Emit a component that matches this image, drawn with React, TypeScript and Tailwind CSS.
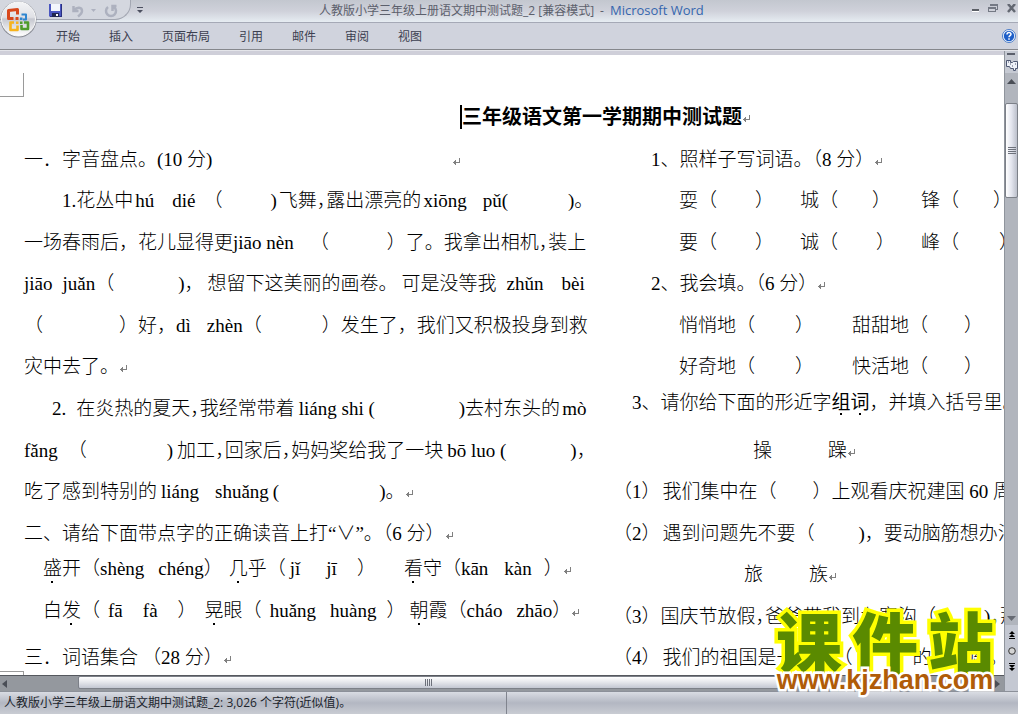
import type { ReactNode } from "react";

const CJK = "font-['Liberation_Serif','Noto_Sans_CJK_SC',serif]";

function Gap({ w }: { w: string }) {
  return <span aria-hidden="true" className={`shrink-0 ${w}`} />;
}

function Ret() {
  return (
    <svg width="8" height="8" viewBox="0 0 8 8" className="mt-1 shrink-0" fill="none" stroke="#808080" shapeRendering="crispEdges">
      <path d="M7.500 0V4.500H1M3.500 2V7M2.500 3V6" />
    </svg>
  );
}

/* Full-width punctuation set at half width */
function Half({ children }: { children: ReactNode }) {
  return <span className="[font-feature-settings:'halt']">{children}</span>;
}

function Dot({ children }: { children: ReactNode }) {
  return (
    <span className="relative">
      {children}
      <span className="absolute -bottom-0.5 left-2 h-0.5 w-0.5 bg-black" />
    </span>
  );
}

function Line({ children, pad = "", raised = false }: { children: ReactNode; pad?: string; raised?: boolean }) {
  return (
    <p className={`flex min-h-0 items-center whitespace-pre leading-6 ${raised ? "pb-3" : ""} ${pad}`}>{children}</p>
  );
}

function LeftColumn() {
  return (
    <div className="grid auto-rows-fr pl-6">
      <Line>一．字音盘点。(10 分)<Gap w="w-60" /><Ret /></Line>
      <Line pad="pl-[38px]">
        1.花丛中<Gap w="w-0.5" />hú<Gap w="w-4.5" />dié<Gap w="w-2" />（<Gap w="w-12" />)<Gap w="w-0.5" />飞舞<Half>，</Half>露出漂亮的
        <Gap w="w-0.5" />xiōng<Gap w="w-4" />pǔ(<Gap w="w-15" />)。
      </Line>
      <Line>
        一场春雨后，花儿显得更jiāo nèn<Gap w="w-4" />（<Gap w="w-14.5" />）了。我拿出相机<Half>，</Half>装上
      </Line>
      <Line>
        jiāo<Gap w="w-2.5" />juǎn（<Gap w="w-16" />)，<Gap w="w-1" />想留下这美丽的画卷。<Gap w="w-1" />可是没等我
        <Gap w="w-2.5" />zhǔn<Gap w="w-4.5" />bèi
      </Line>
      <Line>
        （<Gap w="w-19" />）好，dì<Gap w="w-4" />zhèn（<Gap w="w-15" />）发生了，我们又积极投身到救
      </Line>
      <Line>灾中去了。<Ret /></Line>
      <Line pad="pl-7">
        2.<Gap w="w-2.5" />在炎热的夏天<Half>，</Half>我经常带着<Gap w="w-1" />liáng shi (<Gap w="w-21" />)去村东头的
        <Gap w="w-0.5" />mò
      </Line>
      <Line>
        fǎng<Gap w="w-2.5" />（<Gap w="w-20" />)<Gap w="w-1" />加工<Half>，</Half>回家后<Half>，</Half>妈妈奖给我了一块
        <Gap w="w-1" />bō luo (<Gap w="w-16" />)<Half>，</Half>
      </Line>
      <Line>
        吃了感到特别的<Gap w="w-1" />liáng<Gap w="w-4" />shuǎng<Gap w="w-1" />(<Gap w="w-25" />)。<Ret />
      </Line>
      <Line>二、请给下面带点字的正确读音上打“∨”。（6 分）<Ret /></Line>
      <Line raised pad="pl-[19px]">
        <Dot>盛</Dot>开（shèng<Gap w="w-3.5" />chéng）<Gap w="w-1.5" /><Dot>几</Dot>乎（<Gap w="w-1" />jǐ
        <Gap w="w-6.5" />jī<Gap w="w-5" />）<Gap w="w-7" /><Dot>看</Dot>守（kān<Gap w="w-4" />kàn<Gap w="w-3" />）<Ret />
      </Line>
      <Line raised pad="pl-[19px]">
        白<Dot>发</Dot>（<Gap w="w-2" />fā<Gap w="w-5" />fà<Gap w="w-5" />）<Gap w="w-2" /><Dot>晃</Dot>眼（
        <Gap w="w-2" />huǎng<Gap w="w-3.5" />huàng<Gap w="w-2.5" />）<Gap w="w-1" /><Dot>朝</Dot>霞（cháo
        <Gap w="w-3.5" />zhāo）<Ret />
      </Line>
      <Line>三．词语集合<Gap w="w-1" />（28 分）<Ret /></Line>
    </div>
  );
}

function RightColumn() {
  return (
    <div className="grid min-w-0 auto-rows-fr overflow-hidden">
      <Line pad="pl-[38px]">1、照样子写词语。（8 分）<Ret /></Line>
      <Line pad="pl-[66px]">
        耍（<Gap w="w-9.5" />）<Gap w="w-6.5" />城（<Gap w="w-8.5" />）<Gap w="w-7.5" />锋（<Gap w="w-8.5" />）
      </Line>
      <Line pad="pl-[66px]">
        要（<Gap w="w-9.5" />）<Gap w="w-6.5" />诚（<Gap w="w-9.5" />）<Gap w="w-6.5" />峰（<Gap w="w-10" />）
      </Line>
      <Line pad="pl-[38px]">2、我会填。（6 分）<Ret /></Line>
      <Line pad="pl-[66px]">悄悄地（<Gap w="w-10" />）<Gap w="w-9.5" />甜甜地（<Gap w="w-9" />）</Line>
      <Line pad="pl-[66px]">好奇地（<Gap w="w-10" />）<Gap w="w-9.5" />快活地（<Gap w="w-9" />）</Line>
      <Line raised pad="pl-[19px]">
        3、请你给下面的形近字<b><Dot>组</Dot><Dot>词</Dot></b>，并填入括号里。
      </Line>
      <Line pad="pl-35">操<Gap w="w-14" />躁<Ret /></Line>
      <Line>（1）<Gap w="w-0.5" />我们集中在（<Gap w="w-9" />）上观看庆祝建国 60 周年</Line>
      <Line>（2）<Gap w="w-0.5" />遇到问题先不要（<Gap w="w-11" />)，要动脑筋想办法</Line>
      <Line pad="pl-[131px]">旅<Gap w="w-11.5" />族<Ret /></Line>
      <Line>（3）国庆节放假<Half>，</Half>爸爸带我到九寨沟（<Gap w="w-12" />)<Half>，</Half>那</Line>
      <Line>（4）<Gap w="w-0.5" />我们的祖国是一个多（<Gap w="w-15" />的大家庭。</Line>
    </div>
  );
}

function OfficeButton() {
  return (
    <button aria-label="Office" className="absolute left-0 top-0 z-10">
      <svg width="38" height="39" viewBox="0 0 38 39">
        <defs>
          <linearGradient id="orb" x1="0" y1="0" x2="0" y2="1">
            <stop offset="0" stopColor="#f4f5f7" />
            <stop offset=".45" stopColor="#dfe0e5" />
            <stop offset=".5" stopColor="#c6c8d0" />
            <stop offset="1" stopColor="#ffffff" />
          </linearGradient>
        </defs>
        <circle cx="18.500" cy="19.500" r="18" fill="#8b8e97" />
        <circle cx="18.500" cy="19" r="17" fill="url(#orb)" stroke="#fafafa" />
        <g fill="none" strokeLinejoin="round">
          <path d="M17.500 14.500V9.500L8.500 10.500V18.500H13.500" stroke="#d8481c" strokeWidth="3" />
          <path d="M21.500 14.500H26V19.500H23" stroke="#2f86d0" strokeWidth="2" />
          <path d="M14 22.500H10.500V30H17.500V25.500" stroke="#f7b31c" strokeWidth="2.600" />
          <path d="M21.500 25V29H28V22.500H24" stroke="#4f9c2c" strokeWidth="2.600" />
        </g>
        <path d="M15.500 17h3v3h-3z" fill="#d8481c" />
        <path d="M20 17.500h2.500v2.500H20z" fill="#2f86d0" />
        <path d="M16 21.500h2.500V24H16z" fill="#f7b31c" />
        <path d="M20 21.500h2.500V24H20z" fill="#4f9c2c" />
      </svg>
    </button>
  );
}

function TitleBar() {
  return (
    <header className="relative flex h-[22px] shrink-0 items-start bg-linear-to-b from-[#c3c7cf] via-[#cfd1da] to-[#e6ecf2]">
      <div className="flex h-5 w-[131px] shrink-0 items-center rounded-br-2xl border-b border-r border-[#a3a7b2] bg-[#d4d7df] pt-0.5 pl-12">
        <button aria-label="保存">
          <svg width="15" height="15" viewBox="0 0 15 15">
            <path d="M1 1h13v13H2l-1-1z" fill="#4a56c0" />
            <path d="M13 1h1v13H2v-1h11z" fill="#2a3080" />
            <path d="M3 1h9v7H3z" fill="#f3f6fc" />
            <path d="M4 10h7v4H4z" fill="#20264f" />
            <path d="M8 11h2v2H8z" fill="#fff" />
          </svg>
        </button>
        <button aria-label="撤消" className="ml-2">
          <svg width="14" height="14" viewBox="0 0 14 14" fill="none" stroke="#adb1bf" strokeWidth="2.500">
            <path d="M2.500 2v5h5M3 6.500c3-4 8-3.500 8 .5 0 2-2 4-4 5.500" />
          </svg>
        </button>
        <svg width="5" height="3" viewBox="0 0 5 3" className="ml-1.5"><path d="M0 0h5L2.500 3z" fill="#adb1bf" /></svg>
        <button aria-label="恢复" className="ml-2">
          <svg width="14" height="14" viewBox="0 0 14 14" fill="none" stroke="#adb1bf" strokeWidth="2.500">
            <path d="M4 3a5 5 0 1 0 6 0M12.500 2H8.500v5" />
          </svg>
        </button>
      </div>
      <button aria-label="自定义快速访问工具栏" className="mt-[7px] ml-1.5">
        <svg width="6" height="6" viewBox="0 0 6 6" fill="#4c5060"><path d="M0 0h6v1H0zM0 3h6L3 6z" /></svg>
      </button>
      <h1 className="flex-1 whitespace-pre pl-44 text-xs leading-[21px] text-[#5c606c]">
        人教版小学三年级上册语文期中测试题_2 [兼容模式]<span className="mx-1.5">-</span><span className="text-[13px] text-[#3566ae]">Microsoft Word</span>
      </h1>
      <div className="flex items-center gap-2 pt-1">
        <button aria-label="最小化">
          <svg width="8" height="10" viewBox="0 0 8 10"><path d="M0 5h7v2H0z" fill="#5b5f66" /><path d="M0 7h7v1H0z" fill="#fff" /></svg>
        </button>
        <button aria-label="还原">
          <svg width="10" height="10" viewBox="0 0 10 10" fill="none" stroke="#747984" shapeRendering="crispEdges">
            <path d="M2 .5h7.500v5H8M2 1.500h7M.5 3.500h7v4h-7zM0 4.500h8" />
          </svg>
        </button>
        <button aria-label="关闭">
          <svg width="12" height="10" viewBox="0 0 12 10" stroke="#636872" strokeWidth="2.500"><path d="M2 0l7 8M9 0L2 8" /></svg>
        </button>
      </div>
    </header>
  );
}

const tabs = ["开始", "插入", "页面布局", "引用", "邮件", "审阅", "视图"];

function Ribbon() {
  return (
    <nav className="flex h-[27px] shrink-0 items-center border-t border-[#a5a9b6] bg-[#d0d3dd] pl-14 text-xs text-[#3c4050]">
      <div className="flex flex-1 gap-[29px] pt-0.5">
        {tabs.map((t) => (
          <button key={t}>{t}</button>
        ))}
      </div>
      <button aria-label="帮助" className="mr-0.5">
        <svg width="14" height="14" viewBox="0 0 14 14">
          <circle cx="7" cy="7" r="6.500" fill="#fff" stroke="#4a7cc8" />
          <circle cx="7" cy="7" r="5.200" fill="#1e5fc8" />
          <path d="M5 5.500C5 3 9 3 9 5.300 9 6.700 7 6.700 7 8.300M7 9.300v1.500" fill="none" stroke="#fff" strokeWidth="1.500" />
        </svg>
      </button>
    </nav>
  );
}

function VerticalScroll() {
  return (
    <aside className="flex w-3.5 shrink-0 flex-col items-center border-l border-[#8f949c] bg-[#b1b5bd]">
      <svg width="13" height="22" viewBox="0 0 13 22" className="shrink-0">
        <path d="M0 0h13v22H0z" fill="#c6cad3" />
        <path d="M2 2h8v2H2z" fill="#5b5f6b" />
        <path d="M1.500 9.500h4v2h2l1-1h4v7h-2v2h-2v-2h-3l-1-2h-3z" fill="#eef1f8" stroke="#4e5873" />
        <path d="M3 11h1M5 13h1M7 15h1M10 13h1" stroke="#4e5873" />
      </svg>
      <button aria-label="向上滚动" className="flex h-[30px] w-full shrink-0 items-start justify-center pt-1.5">
        <svg width="9" height="5" viewBox="0 0 9 5"><path d="M0 5h9L4.500 0z" fill="#4a4e56" /></svg>
      </button>
      <div className="flex h-[95px] w-full shrink-0 items-center justify-center rounded-xs border border-[#7c8088] bg-linear-to-r from-white via-[#e3e5ee] to-[#bcc0cb]">
        <svg width="8" height="8" viewBox="0 0 8 8" stroke="#6d717b" shapeRendering="crispEdges"><path d="M0 .5h8M0 2.500h8M0 4.500h8M0 6.500h8" /></svg>
      </div>
      <div className="flex-1" />
      <svg width="9" height="5" viewBox="0 0 9 5" className="mb-1"><path d="M0 0h9L4.500 5z" fill="#666a73" /></svg>
      <div className="flex h-[66px] w-full flex-col items-center gap-2 bg-[#c4c8d2] pt-1.5">
        <svg width="6" height="8" viewBox="0 0 6 8"><path d="M0 3h6L3 0zM0 6h6L3 3zM0 7h6v1H0z" /></svg>
        <svg width="8" height="8" viewBox="0 0 8 8"><circle cx="4" cy="4" r="3.300" fill="#d4d4d4" stroke="#333" /></svg>
        <svg width="6" height="8" viewBox="0 0 6 8"><path d="M0 0h6v1H0zM0 2h6L3 5zM0 5h6L3 8z" /></svg>
      </div>
    </aside>
  );
}

function HorizontalScroll() {
  return (
    <div className="flex h-4 shrink-0 items-stretch border-t border-[#55585e] bg-[#94989e]">
      <button aria-label="向左滚动" className="flex w-[78px] items-center pl-0.5">
        <svg width="5" height="8" viewBox="0 0 5 8"><path d="M5 0v8L0 4z" fill="#4a4e56" /></svg>
      </button>
      <div className="mb-0.5 flex w-[70%] items-center justify-center rounded-xs border border-[#7c8088] bg-linear-to-b from-white via-[#e3e5ea] to-[#c3c7d2]">
        <svg width="8" height="7" viewBox="0 0 8 7" stroke="#6d717b" shapeRendering="crispEdges"><path d="M.5 0v7M2.500 0v7M4.500 0v7M6.500 0v7" /></svg>
      </div>
      <div className="flex flex-1 items-center justify-end pr-1">
        <svg width="5" height="8" viewBox="0 0 5 8"><path d="M0 0v8l5-4z" fill="#4a4e56" /></svg>
      </div>
    </div>
  );
}

function Watermark() {
  return (
    <a href="#top" className="absolute right-6 bottom-5 flex flex-col items-center">
      <span className="flex gap-2.5 font-['Noto_Sans_CJK_SC',sans-serif] text-[66px] font-black leading-[54px] text-[#5a8a00] [-webkit-text-stroke:7px_#ffff00] [paint-order:stroke]">
        <span>课</span>
        <span>件</span>
        <span>站</span>
      </span>
      <span className="font-['Liberation_Sans',sans-serif] text-[27px] font-bold leading-7 text-[#b05c08] [-webkit-text-stroke:5px_#ffffff] [paint-order:stroke]">
        www.kjzhan.com
      </span>
    </a>
  );
}

export default function App() {
  return (
    <div id="top" className="relative flex h-screen flex-col overflow-hidden bg-white font-['Open_Sans','Noto_Sans_CJK_SC',sans-serif]">
      <OfficeButton />
      <TitleBar />
      <Ribbon />
      <div className="h-0.5 shrink-0 border-t border-[#85878c] bg-[#e4e5ea]" />
      <div className="flex min-h-0 flex-1">
        <div className="flex min-w-0 flex-1 flex-col">
          <div className="h-1 shrink-0 bg-[#cfcfd9]" />
          <main className={`relative flex min-h-0 flex-1 flex-col overflow-hidden text-[19px] font-light text-black ${CJK}`}>
            <span className="absolute top-4.5 left-0 h-6 w-6 border-r border-b border-[#9a9a9a]" />
            <span className="absolute bottom-0 left-0 h-1 w-6 border-t border-r border-[#9a9a9a]" />
            <h2 className="mt-11 mb-1 flex h-9 shrink-0 items-center pl-[460px] text-xl leading-6 font-bold">
              <span className="h-6 w-0.5 shrink-0 bg-black" />
              三年级语文第一学期期中测试题
              <Ret />
            </h2>
            <div className="-mb-1 grid min-h-0 flex-1 grid-cols-[613px_minmax(0,1fr)]">
              <LeftColumn />
              <RightColumn />
            </div>
          </main>
          <HorizontalScroll />
        </div>
        <VerticalScroll />
      </div>
      <footer className="flex h-[23px] shrink-0 items-center border-t border-[#8c9099] bg-linear-to-b from-[#d9dce3] via-[#b3b7c2] to-[#c9ccd3] text-xs text-[#20242c]">
        <span className="flex h-full w-[507px] items-center border-r border-[#80848e] pl-1">
          人教版小学三年级上册语文期中测试题_2: 3,026 个字符(近似值)。
        </span>
      </footer>
      <Watermark />
    </div>
  );
}
